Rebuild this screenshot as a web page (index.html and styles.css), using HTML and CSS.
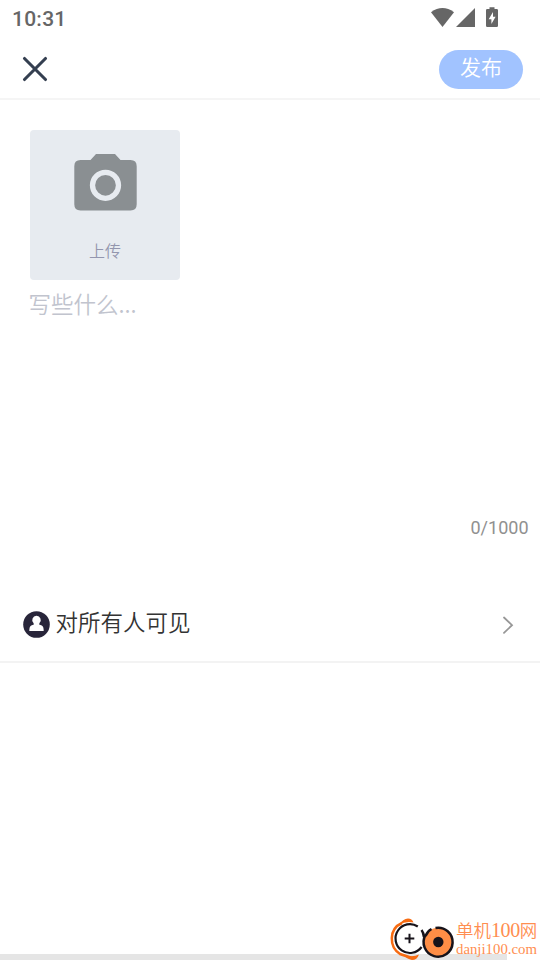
FILE: index.html
```html
<!DOCTYPE html>
<html lang="zh-CN">
<head>
<meta charset="utf-8">
<title>发布</title>
<link rel="stylesheet" href="styles.css">
</head>
<body>
<div class="screen">
  <div class="status">
    <span class="time">10:31</span>
    <svg class="status-icons" width="72" height="22" viewBox="430 6 72 22" fill="#666">
      <path d="M431 12.2Q442.5 3.8 454 12.2L442.5 27Z"/>
      <path d="M475 8V27H456Z"/>
      <path d="M489.500 7.200h5V9h2.200q1.300 0 1.300 1.300v15.400q0 1.300-1.300 1.300h-9.400q-1.300 0-1.300-1.300V10.300q0-1.300 1.300-1.300h2.200z"/>
      <path fill="#fff" d="M493 12l-4.300 7.300h2.700V24l4.200-7.300H493z"/>
    </svg>
  </div>
  <header class="bar">
    <svg class="close" width="26" height="26" viewBox="0 0 26 26"><path d="M2.500 2.500l21 21M23.500 2.500l-21 21" stroke="#343f50" stroke-width="3.100" stroke-linecap="round"/></svg>
    <button class="publish">发布</button>
  </header>
  <main class="editor">
    <div class="upload">
      <svg width="64" height="58" viewBox="-.5 0 64 58">
        <path fill="#8a8f92" d="M7 7H17L22.500 1H41.500L47 7H57Q63.200 7 63.200 13.200V51.200Q63.200 57.400 57 57.400H7Q.8 57.400 .8 51.200V13.200Q.8 7 7 7Z"/>
        <circle cx="32" cy="32.300" r="13" fill="none" stroke="#e7ebf0" stroke-width="5.300"/>
      </svg>
      <span class="upload-label">上传</span>
    </div>
    <p class="placeholder">写些什么...</p>
    <p class="counter">0/1000</p>
  </main>
  <div class="visibility">
    <svg width="27" height="27" viewBox="0 0 27 27">
      <circle cx="13.500" cy="13.500" r="13.300" fill="#28253a"/>
      <path fill="#fff" d="M13.500 4.800a4.200 4.200 0 0 1 3 7.200l-.4 1.400 2.700 1.200q1.900 1 1.900 5.400H6.300q0-4.400 1.900-5.400l2.700-1.200-.4-1.400A4.200 4.200 0 0 1 13.500 4.800z"/>
    </svg>
    <span class="visibility-label">对所有人可见</span>
    <svg class="chevron" width="12" height="18" viewBox="0 0 12 18"><path d="M2 1.500l8 7.700-8 7.700" fill="none" stroke="#979797" stroke-width="1.800" stroke-linecap="round"/></svg>
  </div>
  <div class="bottom-strip"></div>
  <div class="watermark">
    <svg width="66" height="42" viewBox="390 918 66 42" fill="none">
      <circle cx="409.500" cy="938.700" r="14.500" fill="#fff"/>
      <path d="M402 923C388.500 929 389 947 400 954L412 958" stroke="#f76b12" stroke-width="2.500"/>
      <path fill="#f76b12" d="M399 925Q403 918.500 408 918.500Q412 918.500 413.500 922.500Q406 920.500 399 925ZM403 954.500Q412 958 419 954.500Q417 960 412 960Q407 959 403 954.500Z"/>
      <path d="M417.800 926.500A14.400 14.400 0 1 0 421.600 947" stroke="#17131a" stroke-width="2.200"/>
      <path d="M409.500 933.700v9.600M404.700 938.500h9.600" stroke="#17131a" stroke-width="2"/>
      <circle cx="438.300" cy="942" r="14.200" fill="#ff8e46"/>
      <path d="M435.500 927.900A14.500 14.500 0 1 1 425.500 935M421.500 930Q423.500 932.500 424 937M425.500 936Q427.500 931 431.500 929" stroke="#17131a" stroke-width="2.500"/>
      <circle cx="438.300" cy="942" r="5.200" fill="#17131a"/>
    </svg>
    <div class="watermark-text"><span class="wm-name">单机<span class="wm-number">100</span>网</span><span class="wm-url">danji100.com</span></div>
  </div>
</div>
</body>
</html>
```

FILE: styles.css
```css
* { box-sizing: border-box; margin: 0; padding: 0; }
body { background: #fff; font-family: Roboto, "Noto Sans CJK SC", sans-serif; }
svg { display: block; flex: none; }
.screen { position: relative; width: 540px; height: 960px; display: flex; flex-direction: column; overflow: hidden; background: #fff; }
.status { height: 40px; display: flex; justify-content: space-between; padding: 6px 38px 0 12px; }
.time { font-size: 21px; font-weight: 470; line-height: 26px; letter-spacing: .25px; color: #666; }
.bar { height: 60px; display: flex; justify-content: space-between; align-items: flex-start; padding: 10px 17px 0 22px; border-bottom: 2px solid #f5f5f5; }
.close { margin-top: 6px; }
.publish { width: 84px; height: 39px; border: 0; border-radius: 20px; background: #a1c3ff; color: #fff; font-family: "Noto Sans CJK SC", sans-serif; font-weight: 350; font-size: 21px; line-height: 31px; padding-bottom: 7px; }
.editor { height: 485px; padding: 30px 11.500px 0 30px; }
.upload { width: 150px; height: 150px; border-radius: 4px; background: #e7ebf0; display: flex; flex-direction: column; align-items: center; padding-top: 23px; }
.upload-label { margin-top: 27px; font-family: "Noto Sans CJK SC", sans-serif; font-weight: 350; font-size: 16px; line-height: 24px; color: #9396ae; }
.placeholder { margin: 6px 0 0 -1.500px; font-family: "Noto Sans CJK SC", sans-serif; font-weight: 350; font-size: 22.5px; line-height: 34px; color: #c1c4ce; }
.counter { margin-top: 195px; font-size: 18px; line-height: 26px; text-align: right; color: #909090; }
.visibility { height: 78px; display: flex; align-items: center; padding: 2px 26px 0 23px; border-bottom: 2px solid #f3f3f3; }
.visibility-label { flex: 1; margin: -6px 0 0 5.500px; font-family: "Noto Sans CJK SC", sans-serif; font-weight: 350; font-size: 22.5px; line-height: 34px; color: #333; }
.chevron { margin-top: 1px; }
.bottom-strip { width: 507px; height: 6px; margin-top: auto; background: #e5e5e5; }
.watermark { position: absolute; left: 390px; bottom: 0; display: flex; }
.watermark-text { display: flex; flex-direction: column; white-space: nowrap; color: #ff8e50; font-family: "Liberation Serif", "Noto Sans CJK SC", serif; }
.wm-name { padding-top: 2px; font-size: 17.5px; line-height: 20px; font-weight: 350; }
.wm-number { font-size: 20px; line-height: 1; letter-spacing: -.4px; }
.wm-url { font-size: 14.800px; line-height: 17px; }
```
